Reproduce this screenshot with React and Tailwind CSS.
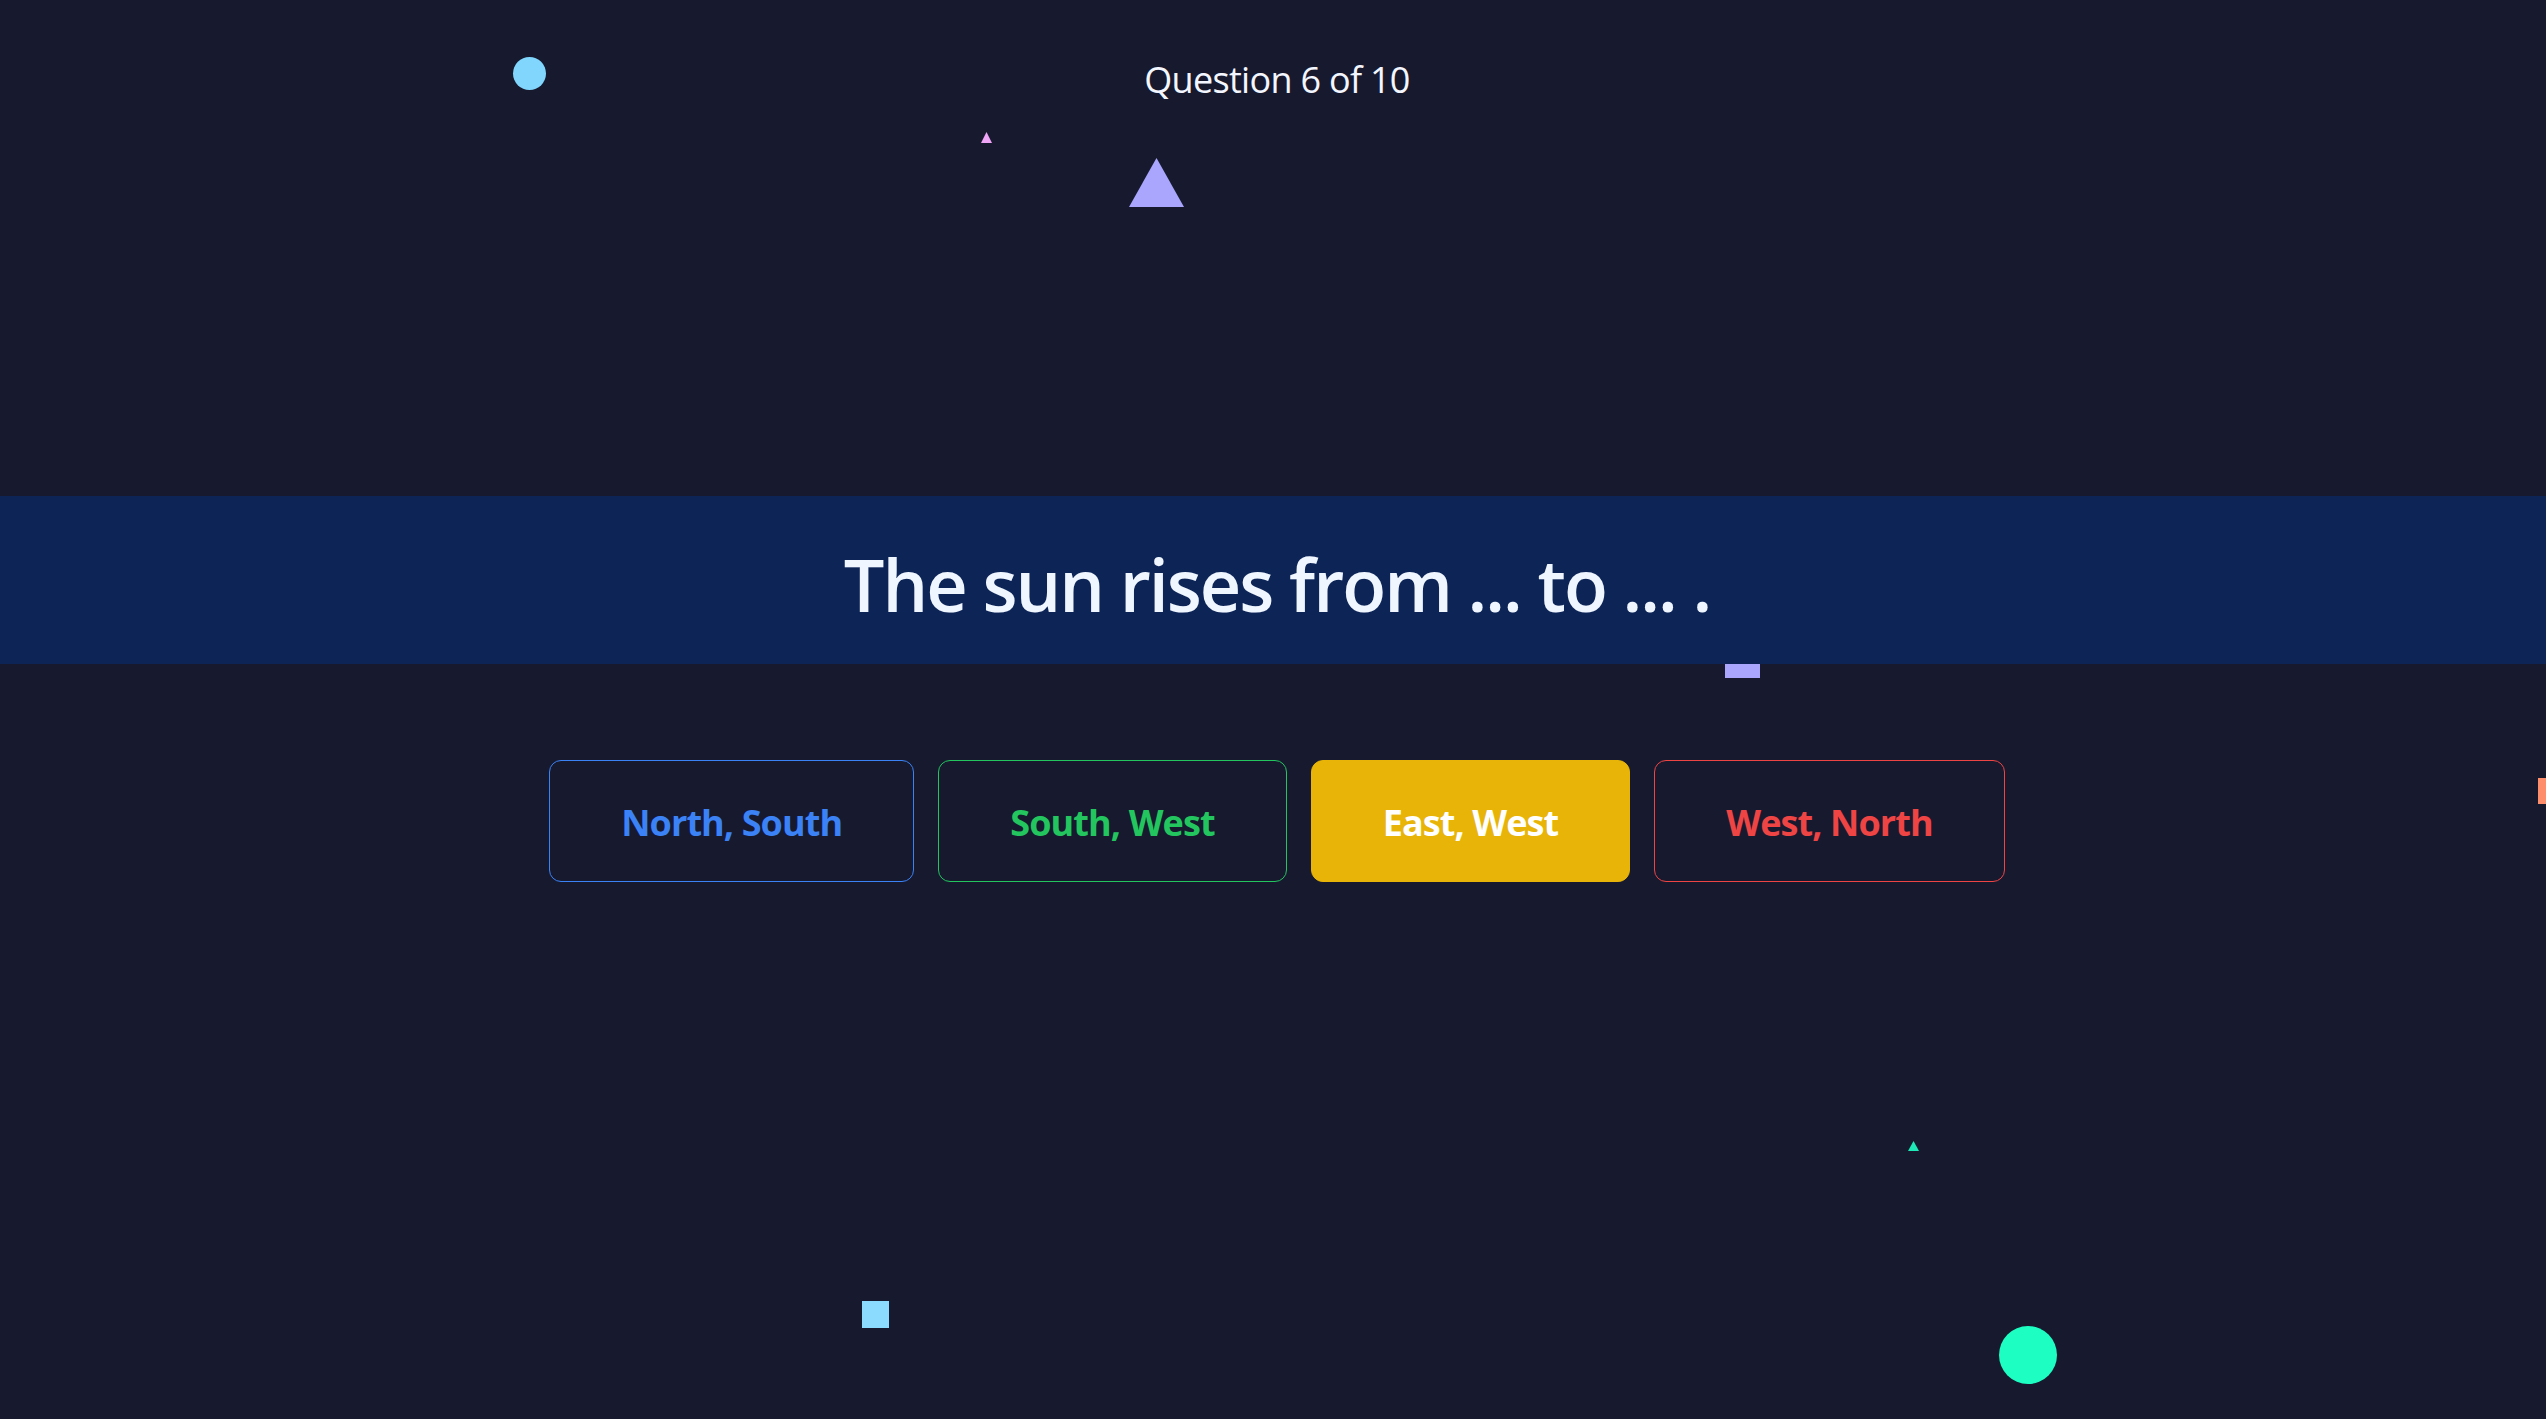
import React from "react";

const font = { fontFamily: '"Open Sans", "Noto Sans", Arial, sans-serif' };

function Triangle({ className, color, w, h }) {
  return (
    <svg className={className} width={w} height={h} viewBox={`0 0 ${w} ${h}`}>
      <polygon points={`${w / 2},0 ${w},${h} 0,${h}`} fill={color} />
    </svg>
  );
}

export default function App() {
  const options = [
    { label: "North, South", cls: "border border-[#3b82f6] text-[#3b82f6] bg-transparent" },
    { label: "South, West", cls: "border border-[#22c55e] text-[#22c55e] bg-transparent" },
    { label: "East, West", cls: "border border-[#e8b407] bg-[#e8b407] text-white" },
    { label: "West, North", cls: "border border-[#ef4444] text-[#ef4444] bg-transparent" },
  ];
  return (
    <div className="relative h-screen w-full overflow-hidden bg-[#171a2f]" style={font}>
      {/* decorative floating shapes on a free canvas */}
      <div className="absolute left-[513px] top-[57px] h-[33px] w-[33px] rounded-full bg-[#80d6fd]" />
      <Triangle className="absolute left-[981px] top-[132px]" color="#f0a4f5" w={11} h={11} />
      <Triangle className="absolute left-[1129px] top-[158px]" color="#aaa6fe" w={55} h={49} />
      <div className="absolute left-[1725px] top-[643px] h-[35px] w-[35px] bg-[#aaa6fe]" />
      <div className="absolute left-[2538px] top-[778px] h-[26px] w-[26px] bg-[#fd8d6b]" />
      <div className="absolute left-[862px] top-[1301px] h-[27px] w-[27px] bg-[#8adbfe]" />
      <Triangle className="absolute left-[1908px] top-[1141px]" color="#1ee9b6" w={11} h={10} />
      <div className="absolute left-[1999px] top-[1326px] h-[58px] w-[58px] rounded-full bg-[#1dffc2]" />

      <div className="relative z-10 flex flex-col">
        <div className="flex justify-center pl-[8px] pt-[60px]">
          <div className="text-[36px] leading-[40px] text-[#f3f6ff] tracking-[-0.7px]">Question 6 of 10</div>
        </div>

        <div className="mt-[396px] w-full bg-[#0d2457] pb-[44px] pl-[8px] pt-[52px]">
          <h1 className="text-center text-[72px] font-semibold leading-none text-[#eff6ff] tracking-[-2px]">
            The sun rises from ... to ... .
          </h1>
        </div>

        <div className="mt-[96px] flex justify-center gap-6 pl-[8px]">
          {options.map((o) => (
            <button
              key={o.label}
              className={`rounded-xl px-[71px] pb-[38px] pt-[42px] text-[36px] font-bold leading-[40px] tracking-[-0.9px] ${o.cls}`}
              style={font}
            >
              {o.label}
            </button>
          ))}
        </div>
      </div>
    </div>
  );
}
